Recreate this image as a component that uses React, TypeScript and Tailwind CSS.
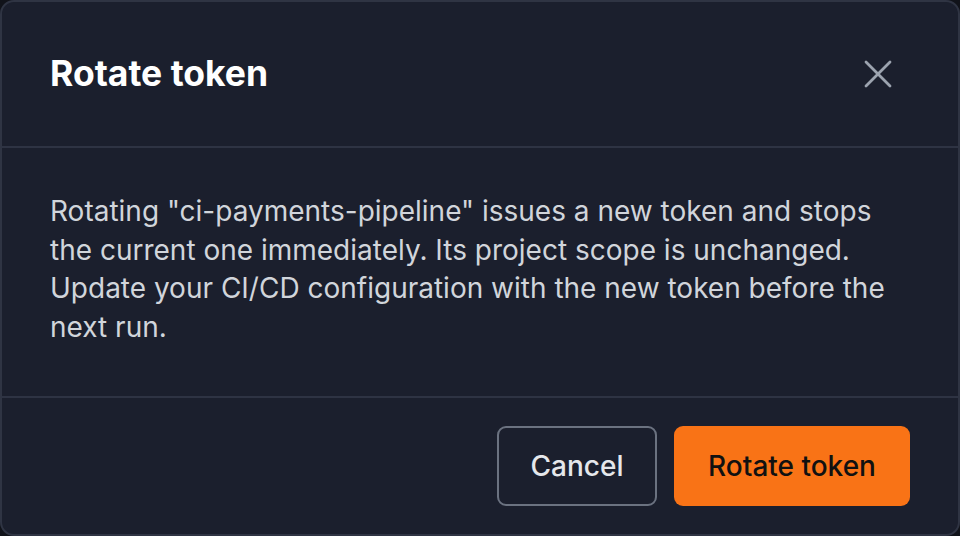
import React from 'react';
import { X } from 'lucide-react';

export default function App() {
  return (
    <div className="w-[960px] h-[536px] bg-[#11131a]" style={{ fontFamily: 'Inter, "Noto Sans", sans-serif' }}>
      <div className="w-full h-full flex flex-col rounded-[14px] border-2 border-[#2f3443] bg-[#1b1f2d] overflow-hidden">
        <div className="h-[146px] shrink-0 flex items-center justify-between pl-[48px] pr-[56px] border-b-2 border-[#2e3343]">
          <h2 className="text-[35.5px] font-bold text-white leading-none">Rotate token</h2>
          <button className="text-[#9ca3af]">
            <X size={48} strokeWidth={1.4} />
          </button>
        </div>

        <div className="flex-1 px-[48px] flex items-center">
          <p className="text-[28px] leading-[38.5px] text-[#d1d5db] -mt-[6px]">
            Rotating "ci-payments-pipeline" issues a new token and stops the current one immediately. Its project scope is unchanged. Update your CI/CD configuration with the new token before the next run.
          </p>
        </div>

        <div className="h-[138px] shrink-0 flex items-center justify-end gap-[17px] pr-[48px] border-t-2 border-[#2e3343]">
          <button className="h-[80px] w-[160px] rounded-[9px] border-2 border-[#6b7280] text-[28px] font-medium text-[#e5e7eb]">
            Cancel
          </button>
          <button className="h-[80px] w-[236px] rounded-[9px] bg-[#f97316] text-[28px] font-medium text-[#111111]">
            Rotate token
          </button>
        </div>
      </div>
    </div>
  );
}
